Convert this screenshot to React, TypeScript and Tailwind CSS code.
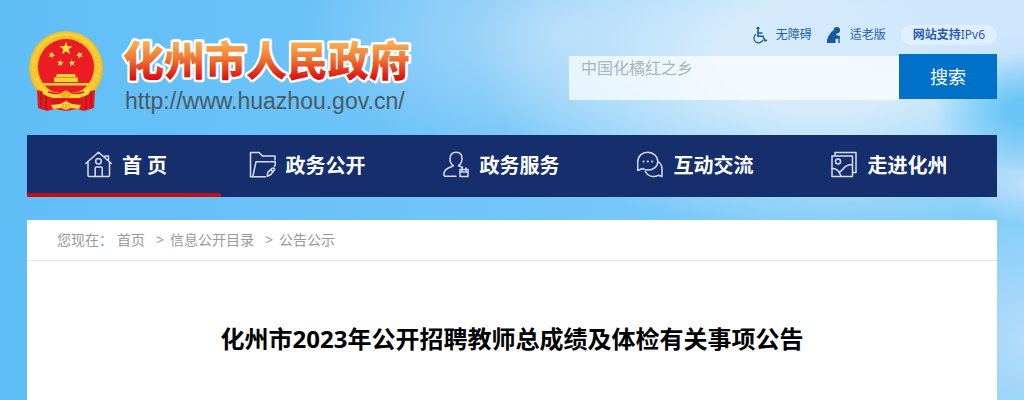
import type { ReactNode } from "react";

interface NavItem {
  label: string;
  icon: ReactNode;
  active?: boolean;
}

function star(cx: number, cy: number, r: number, turn = 0) {
  return Array.from({ length: 10 }, (_, i) => {
    const a = ((i * 36 - 90 + turn) * Math.PI) / 180;
    const d = i % 2 === 0 ? r : r * 0.4;
    return `${(cx + d * Math.cos(a)).toFixed(2)},${(cy + d * Math.sin(a)).toFixed(2)}`;
  }).join(" ");
}

function Emblem() {
  return (
    <svg viewBox="0 0 74 80" className="mt-[3px] h-20 w-[74px] shrink-0" aria-hidden="true">
      <defs>
        <radialGradient id="gold" gradientUnits="userSpaceOnUse" cx="37" cy="36" r="38">
          <stop offset="0.7" stopColor="#e9a818" />
          <stop offset="0.84" stopColor="#fbd83c" />
          <stop offset="1" stopColor="#e8b021" />
        </radialGradient>
      </defs>
      <ellipse cx="37" cy="37" rx="37" ry="37" fill="url(#gold)" />
      <circle cx="37" cy="37" r="32" fill="none" stroke="#edba2c" strokeWidth="1" strokeDasharray="7 2" />
      <circle cx="37" cy="36" r="28" fill="#ec1c24" />
      <polygon points={star(37, 17.5, 7)} fill="#fde04a" />
      <polygon points={star(22.7, 24, 3.8, 20)} fill="#fde04a" />
      <polygon points={star(50.7, 24, 3.8, -20)} fill="#fde04a" />
      <polygon points={star(31.3, 32, 3.8, 10)} fill="#fde04a" />
      <polygon points={star(43, 32, 3.8, -10)} fill="#fde04a" />
      <path d="M8 59 L20 62 L37 67 L54 62 L66 59 L65 77 L55 80 L48 78 L37 80 L26 78 L18 80 L9 77Z" fill="#e01b22" />
      <path d="M12 61 V77 M17 62 V78 M57 62 V78 M62 61 V77" stroke="#a90f18" strokeWidth="1" />
      <path d="M28 43 H46 L47 46 H27Z M25 46.500 H49 V51 H25Z M14 52 H60 L59 54.500 H15Z" fill="#fbd336" />
      <path d="M26 46.500 H48" stroke="#d99417" strokeWidth="1" />
      <path d="M12 56 Q22 63 37 61 Q52 63 62 56 L60 63 Q48 70 37 66 Q26 70 14 63Z" fill="#fcd537" />
      <path d="M19 61 Q29 64 33 61 M55 61 Q45 64 41 61" fill="none" stroke="#d61e20" strokeWidth="1.500" />
      <path d="M31 64 Q37 55 43 64 L40 67 H34Z" fill="#f3b321" />
      <path d="M22 69 Q29 65 35 69 L32 73 L23 74Z M52 69 Q45 65 39 69 L42 73 L51 74Z" fill="#d7151e" />
      <path d="M22 74 L31 73 L37 70 L43 73 L52 74 L50 78 L42 77 L37 79 L32 77 L24 78Z" fill="#fcd537" />
      <path d="M33 77 L35 73 M37 78 V73 M41 77 L39 73" stroke="#da9317" strokeWidth="1" />
    </svg>
  );
}

function NavIcon({ children }: { children: ReactNode }) {
  return (
    <svg
      viewBox="0 0 27 27"
      className="size-[27px] shrink-0"
      fill="none"
      stroke="#d5def6"
      strokeWidth="1.5"
      strokeLinecap="round"
      strokeLinejoin="round"
      aria-hidden="true"
    >
      {children}
    </svg>
  );
}

const navItems: NavItem[] = [
  {
    label: "首 页",
    active: true,
    icon: (
      <NavIcon>
        <path d="M.7 12.500 13.500 1.300 26.300 12.500M3 11v13.500q0 1 1 1h19.500q1 0 1-1V11M20 6.500V5h3.500v4.500" />
        <circle cx="13.500" cy="10.200" r="2.800" />
        <path d="M10.200 25V17q0-1 1-1h5q1 0 1 1v8" />
      </NavIcon>
    ),
  },
  {
    label: "政务公开",
    icon: (
      <NavIcon>
        <path d="M16.500 25.700H1.500V1.500H10l3.500 3.500H26v4M3.800 25.500 7 10.800H26.300V13l-.8 2.500" />
        <path d="m18.200 25.200.6-3.800 4.500-4.300q1.500-.5 2.500 1.200l-4.200 5.500zM21.800 18.800l2.500 2" />
      </NavIcon>
    ),
  },
  {
    label: "政务服务",
    icon: (
      <NavIcon>
        <path d="M10.300 14.700C7.500 13 7 10 7 7.500 7 3.500 9.500 1.300 13 1.300S19 3.500 19 7.500c0 3-1 5.500-3.500 7.200l4 1.500M10.300 14.700C8.500 16.500 1 16 .8 23.500q0 1.800 1.500 1.800H13" />
        <path d="M17 18.500h8v7h-8zM17 21h8M19 17v2.500M23 17v2.500" />
      </NavIcon>
    ),
  },
  {
    label: "互动交流",
    icon: (
      <NavIcon>
        <path d="M.7 19.500V11C.7 5 5 1.300 10.800 1.300S20.800 5.500 20.800 10.500 16.500 19 10.800 19c-2 0-3.500-.3-5-1.500zM21 10.500c3 2 4 4.500 4 7.500v7.500l-3.500-1.200C16 27 10.500 25 8.300 20.500" />
        <path d="M6.500 10.500h.1M10.800 10.500h.1M15.100 10.500h.1" strokeWidth="2" />
      </NavIcon>
    ),
  },
  {
    label: "走进化州",
    icon: (
      <NavIcon>
        <path d="M1 5h20.500v20.500H1zM4 4.500v-3h21v20h-3" />
        <circle cx="7" cy="10.500" r="2.500" />
        <path d="M1 17.500c4-.5 7 2 9 7.500M8 21c2-.2 2.500-1 4-3s4-4.500 9-4.200" />
      </NavIcon>
    ),
  },
];

const crumbs = ["首页", "信息公开目录", "公告公示"];

function Logo() {
  return (
    <a href="#" className="flex items-start gap-4 pt-7">
      <Emblem />
      <span className="block">
        <svg width="300" height="60" className="block">
          <defs>
            <linearGradient id="siteName" gradientUnits="userSpaceOnUse" x1="0" y1="12" x2="0" y2="52">
              <stop offset="0" stopColor="#fbb655" />
              <stop offset="0.45" stopColor="#f07a35" />
              <stop offset="1" stopColor="#d90a10" />
            </linearGradient>
          </defs>
          <text
            x="4"
            y="48"
            fill="url(#siteName)"
            stroke="#ffffff"
            strokeWidth="5"
            strokeLinejoin="round"
            paintOrder="stroke"
            className="font-['Noto_Sans_CJK_SC',sans-serif] text-[41px] font-black"
          >
            化州市人民政府
          </text>
        </svg>
        <span className="block pl-1.5 font-['Liberation_Sans',sans-serif] text-[23px] leading-[26px] text-[#4a5a64]">
          http://www.huazhou.gov.cn/
        </span>
      </span>
    </a>
  );
}

function Tools() {
  return (
    <div className="flex h-5 items-center justify-end text-xs text-[#1d62a8]">
      <a href="#" className="flex items-center gap-2">
        <svg viewBox="0 0 16 18" className="h-[18px] w-4" fill="none" stroke="#155a9f" strokeWidth="1.200" aria-hidden="true">
          <circle cx="6" cy="2.300" r="1.500" fill="#155a9f" stroke="none" />
          <path d="M6 4v6.300h5l2 4.500 2-.8M6 7h4.500" strokeWidth="1.600" />
          <path d="M4 8.200a4.700 4.700 0 1 0 7 5.600" />
        </svg>
        无障碍
      </a>
      <a href="#" className="ml-[14px] flex items-center gap-2">
        <svg viewBox="0 0 16 18" className="h-[18px] w-4" fill="#155a9f" aria-hidden="true">
          <circle cx="10.800" cy="4.200" r="3.200" />
          <path d="M8 4C5 5.500 2.500 9 1 14v3h8.500v-4l3.500-.5c1.500-.3 1.500-2.500 0-2.800L10 9l1.500-2.500z" />
          <path d="M12.300 11.500h1.400V17h-1.400z" />
        </svg>
        适老版
      </a>
      <a href="#" className="ml-[15px] rounded-full bg-white/35 px-3 leading-5 text-[#2b5cae]">
        <b>网站支持</b>IPv6
      </a>
    </div>
  );
}

function Search() {
  return (
    <form className="flex items-start" onSubmit={(e) => e.preventDefault()}>
      <input
        type="text"
        aria-label="站内搜索"
        placeholder="中国化橘红之乡"
        className="mt-0.5 h-11 min-w-0 flex-1 bg-white/70 px-3 pb-5 text-base leading-6 outline-none placeholder:text-[#a9b4bd]"
      />
      <button type="submit" className="h-[45px] w-[98px] bg-[#0071c8] text-lg text-white">
        搜索
      </button>
    </form>
  );
}

export default function App() {
  return (
    <div className="min-h-screen bg-[radial-gradient(ellipse_90px_60px_at_100%_28%,#6cc5f6_20%,#6cc5f600_100%),radial-gradient(ellipse_60px_40px_at_100%_46%,#bfdffb_0%,#bfdffb00_100%),radial-gradient(ellipse_300px_100px_at_100%_0%,#d0e6fd_30%,#d0e6fd00_100%),radial-gradient(ellipse_340px_180px_at_80%_14%,#d6ecfb_30%,#d6ecfb00_100%),radial-gradient(ellipse_100px_120px_at_100%_85%,#b5dcfb_0%,#b5dcfb00_100%),radial-gradient(ellipse_260px_130px_at_55%_8%,#add9f9_0%,#add9f900_100%),linear-gradient(90deg,#60bef7_0%,#72c5f8_50%,#85cff8_100%)] px-[27px] font-['Noto_Sans','Noto_Sans_CJK_SC',sans-serif]">
      <header className="flex h-[135px] justify-between pl-0.5">
        <Logo />
        <div className="flex w-[428px] flex-col gap-[9px] pt-[25px]">
          <Tools />
          <Search />
        </div>
      </header>

      <nav className="grid grid-cols-5 bg-[#162e6c]">
        {navItems.map((item) => (
          <a
            key={item.label}
            href="#"
            className={`flex h-[62px] items-center justify-center gap-2.5 border-b-4 text-xl font-bold text-white ${
              item.active ? "border-[#c20e17] pl-1" : "border-transparent pr-[22px]"
            }`}
          >
            {item.icon}
            <span className="pt-1">{item.label}</span>
          </a>
        ))}
      </nav>

      <main className="mt-[23px] min-h-[180px] bg-white">
        <div className="flex h-[41px] items-center border-b border-[#e8e8e8] px-[30px] text-sm text-[#999999]">
          <span className="mr-1">您现在：</span>
          {crumbs.map((crumb, i) => (
            <span key={crumb} className="flex">
              {i > 0 && <span className="mr-1.5 ml-[11px]">&gt;</span>}
              <a href="#">{crumb}</a>
            </span>
          ))}
        </div>
        <h1 className="px-8 pt-[60px] pb-10 text-center text-2xl leading-9 font-bold text-black">
          化州市2023年公开招聘教师总成绩及体检有关事项公告
        </h1>
      </main>
    </div>
  );
}
